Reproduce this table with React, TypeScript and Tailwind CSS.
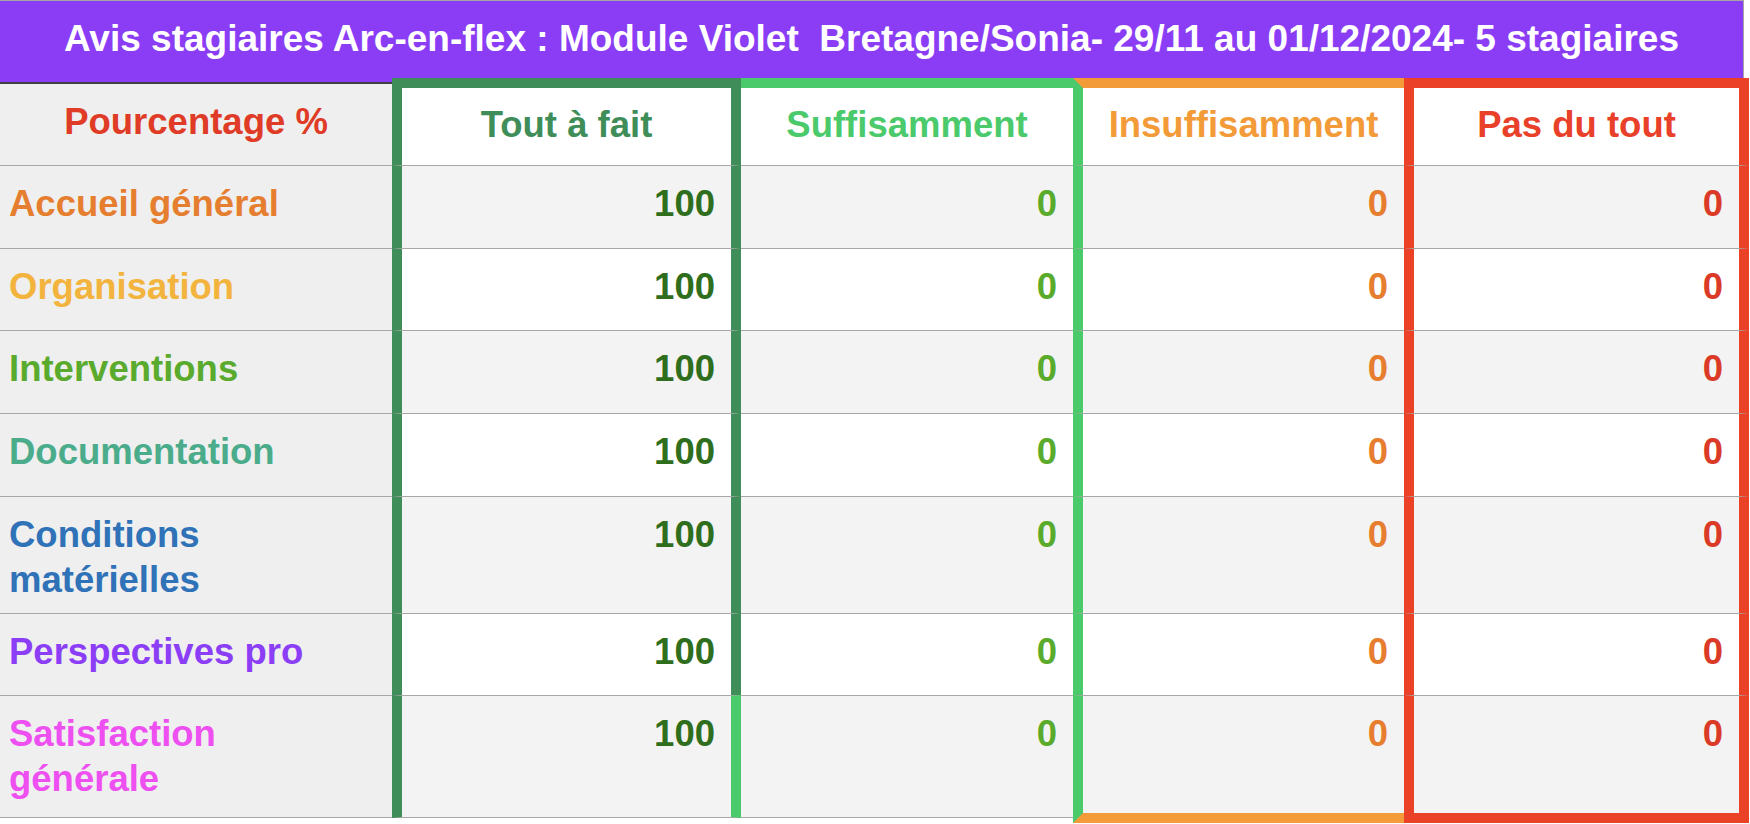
type Row = {
  label: string[];
  labelColor: string;
  stripe: boolean;
  last?: boolean;
};

const rows: Row[] = [
  { label: ["Accueil général"], labelColor: "text-[#e67e2f]", stripe: true },
  { label: ["Organisation"], labelColor: "text-[#f3b43e]", stripe: false },
  { label: ["Interventions"], labelColor: "text-[#5aab2d]", stripe: true },
  { label: ["Documentation"], labelColor: "text-[#4aac8b]", stripe: false },
  { label: ["Conditions", "matérielles"], labelColor: "text-[#2f72b8]", stripe: true },
  { label: ["Perspectives pro"], labelColor: "text-[#8b3ef6]", stripe: false },
  { label: ["Satisfaction", "générale"], labelColor: "text-[#ee4ff1]", stripe: true, last: true },
];

export default function App() {
  return (
    <div className="w-[1750px] h-[824px] overflow-hidden bg-white font-['Liberation_Sans',Arial,sans-serif] font-bold text-[36.5px] leading-[45px]">
      <div className="w-[1744px] h-[82px] border-t border-r border-t-[#a5a5a5] border-r-[#a5a5a5] bg-[#8b3df6] flex items-center justify-center pb-[7px]">
        <h1 className="text-white text-[37px] whitespace-pre">
          Avis stagiaires Arc-en-flex : Module Violet  Bretagne/Sonia- 29/11 au 01/12/2024- 5 stagiaires
        </h1>
      </div>

      <div className="relative -mt-1 grid w-[1749px] grid-cols-[392px_349px_332px_331px_345px] grid-rows-[87px_83px_82px_83px_83px_117px_82px_128px]">
        {/* header row */}
        <div className="mt-1 border-t-2 border-t-[#404040] bg-[#efefef] pt-[15px] text-center text-[#df3b26]">
          Pourcentage %
        </div>
        <div className="bg-white border-t-[10px] border-l-[10px] border-r-[10px] border-t-[#3f8e59] border-l-[#3f8e59] border-r-[#3f8e59] pt-[14px] text-center text-[#3f8e59]">
          Tout à fait
        </div>
        <div className="bg-white border-t-[10px] border-t-[#4bca6c] pt-[14px] text-center text-[#4bca6c]">
          Suffisamment
        </div>
        <div className="bg-white border-t-[10px] border-l-[10px] border-t-[#f29b38] border-l-[#4bca6c] pt-[14px] text-center text-[#f29b38]">
          Insuffisamment
        </div>
        <div className="bg-white border-t-[10px] border-l-[10px] border-r-[10px] border-t-[#ea4127] border-l-[#ea4127] border-r-[#ea4127] pt-[14px] text-center text-[#e9402a]">
          Pas du tout
        </div>

        {rows.map((r, i) => {
          const bg = r.stripe ? "bg-[#f3f3f3]" : "bg-white";
          return [
            <div
              key={`l${i}`}
              className={`bg-[#efefef] border-t border-t-[#a7a7a7] pl-[9px] pt-[15px] ${r.labelColor} ${
                r.last ? "border-b border-b-[#a7a7a7] mb-[5px]" : ""
              }`}
            >
              {r.label.map((t, j) => (
                <div key={j}>{t}</div>
              ))}
            </div>,
            <div
              key={`a${i}`}
              className={`${bg} border-t border-t-[#a7a7a7] border-l-[10px] border-r-[10px] border-l-[#3f8e59] pr-4 pt-[15px] text-right text-[#2f6e1c] ${
                r.last ? "border-r-[#4bca6c] border-b border-b-[#a7a7a7] mb-[5px]" : "border-r-[#3f8e59]"
              }`}
            >
              100
            </div>,
            <div
              key={`b${i}`}
              className={`${bg} border-t border-t-[#a7a7a7] pr-4 pt-[15px] text-right text-[#5aab2b] ${
                r.last ? "border-b border-b-[#a7a7a7] mb-[5px]" : ""
              }`}
            >
              0
            </div>,
            <div
              key={`c${i}`}
              className={`${bg} border-t border-t-[#a7a7a7] border-l-[10px] border-l-[#4bca6c] pr-4 pt-[15px] text-right text-[#e77d2f] ${
                r.last ? "border-b-[10px] border-b-[#f29b38]" : ""
              }`}
            >
              0
            </div>,
            <div
              key={`d${i}`}
              className={`${bg} border-t border-t-[#a7a7a7] border-l-[10px] border-r-[10px] border-l-[#ea4127] border-r-[#ea4127] pr-4 pt-[15px] text-right text-[#da3a26] ${
                r.last ? "border-b-[10px] border-b-[#ea4127]" : ""
              }`}
            >
              0
            </div>,
          ];
        })}
      </div>
    </div>
  );
}
